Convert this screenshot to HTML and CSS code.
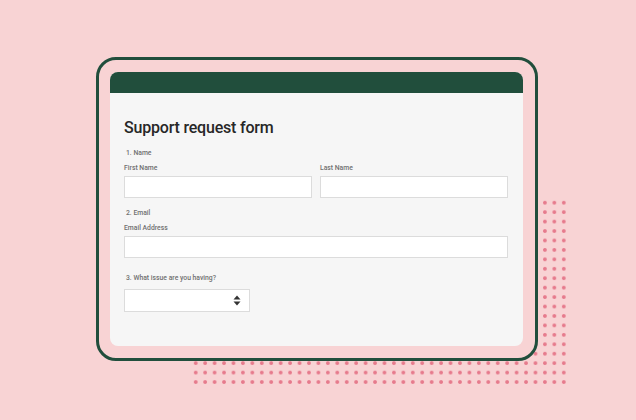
FILE: index.html
```html
<!DOCTYPE html>
<html>
	<head>
		<meta charset="UTF-8">
		<title>Support request form</title>
		<link rel="stylesheet" href="styles.css">
	</head>
	<body>
		<section class="stage">
			<div class="dots"></div>
			<div class="frame">
				<div class="card">
					<div class="card-top"></div>
					<div class="card-body">
						<h1 class="title">Support request form</h1>

						<p class="question">1. Name</p>
						<div class="row">
							<div class="field">
								<p class="field-label">First Name</p>
								<div class="input"></div>
							</div>
							<div class="field">
								<p class="field-label">Last Name</p>
								<div class="input"></div>
							</div>
						</div>

						<p class="question">2. Email</p>
						<p class="field-label">Email Address</p>
						<div class="input"></div>

						<p class="question q3">3. What issue are you having?</p>
						<div class="select">
							<svg class="arrows" width="8" height="11" viewBox="0 0 8 11">
								<path d="M4 0.5 L7.5 4.5 L0.5 4.5 Z" fill="#333"/>
								<path d="M4 10.5 L7.5 6.5 L0.5 6.5 Z" fill="#333"/>
							</svg>
						</div>
					</div>
				</div>
			</div>
		</section>
	</body>
</html>
```

FILE: styles.css
```css
	html,body{
		margin:0;
		padding:0;
	}
	body{
		width:636px;
		height:420px;
		overflow:hidden;
		background:#f8d3d4;
		font-family:Roboto,"Liberation Sans",sans-serif;
	}
	p{margin:0;}
	.stage{
		position:relative;
		padding:57px 0 0 96px;
	}
	/* dotted pattern behind the frame */
	.dots{
		position:absolute;
		left:191px;
		top:198px;
		width:378px;
		height:189px;
		background-image:radial-gradient(circle at center,#e67a8c 1.4px,rgba(230,122,140,0) 2.3px);
		background-size:9.45px 9.45px;
	}
	.frame{
		position:relative;
		z-index:1;
		box-sizing:border-box;
		width:442px;
		height:304px;
		padding:12px 12px 12px 11px;
		border:3px solid #214e3c;
		border-radius:20px;
		background:#f8d3d4;
	}
	.card{
		height:274px;
		background:#f6f6f6;
		border-radius:8px;
		overflow:hidden;
	}
	.card-top{
		height:21px;
		background:#214e3c;
	}
	.card-body{
		padding:0 15px 0 14px;
	}
	.title{
		margin:25px 0 0 0;
		font-size:16px;
		line-height:20px;
		font-weight:500;
		letter-spacing:-0.2px;
		color:#272727;
	}
	.question{
		margin-top:10px;
		padding-left:2px;
		font-size:6.8px;
		line-height:10px;
		font-weight:500;
		color:#707070;
	}
	.q3{margin-top:15px;}
	.field-label{
		margin-top:5px;
		font-size:6.8px;
		line-height:10px;
		font-weight:500;
		color:#707070;
	}
	.row{
		display:flex;
		gap:8px;
	}
	.field{flex:1;}
	.input{
		box-sizing:border-box;
		height:22px;
		margin-top:3px;
		background:#fff;
		border:1px solid #dcdcdc;
	}
	.select{
		box-sizing:border-box;
		display:flex;
		align-items:center;
		justify-content:flex-end;
		width:126px;
		height:23px;
		margin-top:6px;
		padding-right:8px;
		background:#fff;
		border:1px solid #dcdcdc;
	}
```
